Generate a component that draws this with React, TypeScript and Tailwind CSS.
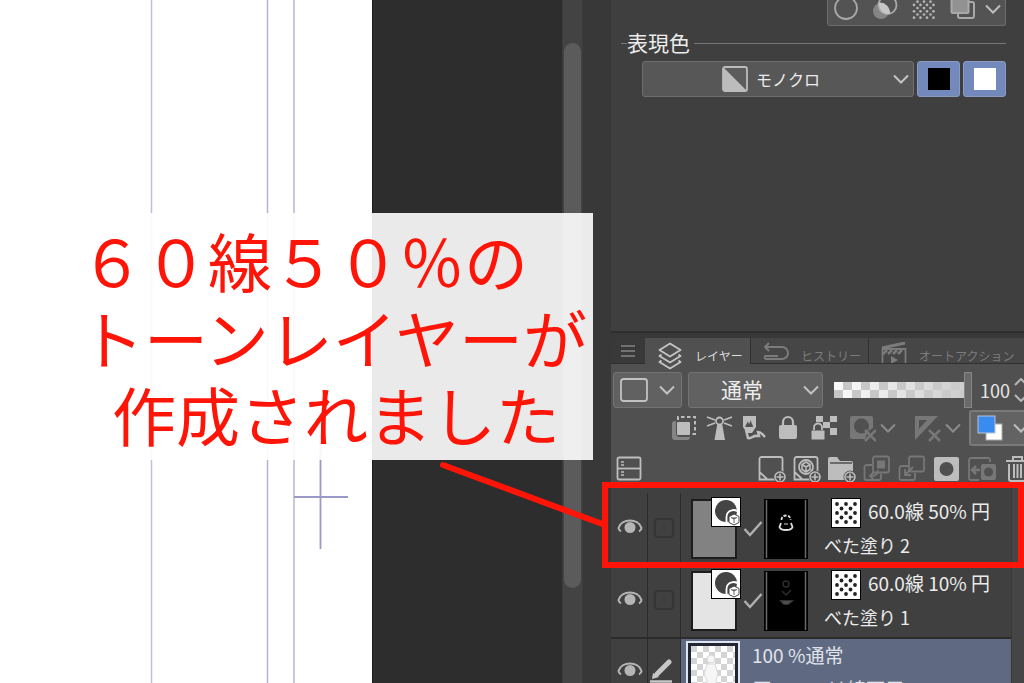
import { useState } from 'react';
import type { ReactNode } from 'react';

interface Layer {
  id: number;
  lines: string;
  name: string;
  fill: string;
  mask: ReactNode;
}

const layers: Layer[] = [
  {
    id: 2,
    lines: '60.0線 50% 円',
    name: 'べた塗り 2',
    fill: 'bg-[#828282]',
    mask: (
      <g fill="none" stroke="#e0e0e0" strokeWidth="1.8">
        <path d="M16.500 20c0-3 2-4.500 4.500-4.500s4.500 1.500 4.500 4.500" strokeDasharray="3 1.500" />
        <path d="M16 23l-1.500 4c1 4 12 4 13 0L26 23" />
        <path d="M19 24h4" stroke="#777" />
      </g>
    ),
  },
  {
    id: 1,
    lines: '60.0線 10% 円',
    name: 'べた塗り 1',
    fill: 'bg-[#e4e4e4]',
    mask: (
      <g fill="none" stroke="#2e2e2e" strokeWidth="1.4">
        <circle cx="21" cy="12" r="3" />
        <path d="M17 19l4 4 5-5" />
        <path d="M16 29h11l-4 3h-4z" fill="#555" stroke="#444" />
      </g>
    ),
  },
];

function Chevron({ className = '' }: { className?: string }) {
  return (
    <svg viewBox="0 0 16 10" className={`w-4 h-2.5 shrink-0 pointer-events-none ${className}`} fill="none" stroke="currentColor" strokeWidth="2">
      <path d="M1 1.5l7 7 7-7" />
    </svg>
  );
}

function Icon({ children, className = '' }: { children: ReactNode; className?: string }) {
  return (
    <svg viewBox="0 0 28 28" className={`w-7 h-7 shrink-0 ${className}`} fill="none" stroke="currentColor" strokeWidth="1.8">
      {children}
    </svg>
  );
}

function IconButton({ label, dim, children }: { label: string; dim?: boolean; children: ReactNode }) {
  return (
    <button aria-label={label} className={`shrink-0 ${dim ? 'text-[#777777]' : 'text-[#bdbdbd]'}`}>
      <Icon>{children}</Icon>
    </button>
  );
}

function PlusBadge() {
  return (
    <g>
      <circle cx="22" cy="22" r="6.5" fill="#505050" stroke="none" />
      <circle cx="22" cy="22" r="5" strokeWidth="1.6" />
      <path d="M22 18.5v7M18.5 22h7" strokeWidth="1.6" />
    </g>
  );
}

function ToneIcon() {
  const dots = [
    [5, 5], [14, 5], [23, 5],
    [9.5, 9.5], [18.5, 9.5],
    [5, 14], [14, 14], [23, 14],
    [9.5, 18.5], [18.5, 18.5],
    [5, 23], [14, 23], [23, 23],
  ];
  return (
    <svg viewBox="0 0 28 28" className="w-[30px] h-[30px] shrink-0 bg-white border border-black">
      {dots.map(([x, y]) => (
        <circle key={`${x}-${y}`} cx={x} cy={y} r="1.9" fill="#222222" />
      ))}
    </svg>
  );
}

function EyeButton() {
  return (
    <button aria-label="レイヤーの表示" className="w-[34px] pb-1 self-stretch flex items-center justify-center shrink-0 text-[#b5b5b5]">
      <svg viewBox="0 0 26 18" className="w-[26px] h-[18px]" fill="none" stroke="currentColor" strokeWidth="2">
        <path d="M4 13.500c-1.500-1-2.500-2-2.500-3.500C3 5 8 2.500 13 2.500S23 5 24.500 10c0 1.500-1 2.500-2.500 3.500" />
        <circle cx="13" cy="9.500" r="5.500" fill="currentColor" stroke="none" />
      </svg>
    </button>
  );
}

function Canvas() {
  return (
    <div className="flex-1 flex min-w-0">
      <div className="relative flex-1 bg-white overflow-hidden">
        <svg className="absolute right-0 top-0 w-[372px] h-full" stroke="#b4b4d2" strokeWidth="1.5">
          <line x1="151.500" y1="0" x2="151.500" y2="100%" stroke="#c0c0d2" />
          <line x1="267.500" y1="0" x2="267.500" y2="100%" />
          <line x1="294" y1="0" x2="294" y2="100%" />
          <path d="M320.500 445V549M294 497H348" stroke="#9a9ac8" strokeWidth="1.800" />
        </svg>
      </div>
      <div className="w-[190px] shrink-0 bg-[#2d2d2d] border-l border-[#1c1c1c]" />
      <div className="w-[21px] shrink-0 bg-[#434343] border-x border-[#3c3c3c] flex flex-col px-px">
        <div className="flex-1 mt-[43px] mb-[95px] rounded-full bg-[#5b5b5b]" />
      </div>
    </div>
  );
}

function PropertyPanel() {
  return (
    <section className="h-[333px] shrink-0 bg-[#3f3f3f] border-b-2 border-[#2e2e2e] pr-[18px]">
      <div className="flex justify-end">
        <div className="flex items-end gap-[13px] h-[26px] pl-[5px] pr-1 pb-[5px] bg-[#535353] border border-t-0 border-[#6c6c6c] rounded-b-[3px] text-[#a9a9a9]">
          <button aria-label="境界効果">
            <svg viewBox="0 0 26 24" className="w-[26px] h-6" fill="none" stroke="currentColor" strokeWidth="1.8">
              <circle cx="13" cy="12" r="11" />
            </svg>
          </button>
          <button aria-label="ライン抽出">
            <svg viewBox="0 0 26 24" className="w-[26px] h-6">
              <circle cx="9" cy="15" r="8" fill="#858585" />
              <circle cx="15.500" cy="9" r="9" fill="#535353" stroke="currentColor" strokeWidth="1.800" />
              <path d="M7 6.500C13 6 18.500 11 18 18C11 19 6 13 7 6.500z" fill="#c6c6c6" />
            </svg>
          </button>
          <button aria-label="トーン">
            <svg viewBox="0 0 26 24" className="w-[26px] h-6" fill="#b4b4b4">
              {[0, 1, 2, 3, 4, 5, 6].map((row) =>
                [0, 1, 2, 3].map((i) =>
                  row % 2 === 1 && i === 3 ? null : (
                    <circle key={`${row}-${i}`} cx={(row % 2 ? 6.5 : 3) + i * 6.5} cy={2.5 + row * 3.2} r="1.35" />
                  )
                )
              )}
            </svg>
          </button>
          <button aria-label="レイヤーカラー">
            <svg viewBox="0 0 26 24" className="w-[26px] h-6" fill="none" stroke="currentColor" strokeWidth="2">
              <rect x="8" y="6" width="16" height="16" rx="2" />
              <rect x="1.500" y="0" width="17" height="17" rx="1.500" fill="#929292" />
            </svg>
          </button>
          <button aria-label="その他" className="-ml-1 mb-[6px] text-[#bdbdbd]">
            <Chevron />
          </button>
        </div>
      </div>

      <div className="flex items-center gap-1 pl-[10px] mt-0.5 h-[30px] text-[21px] text-[#ececec]">
        <span className="w-1.5 -mr-1 h-px bg-[#777777]" />
        <label htmlFor="expression">表現色</label>
        <span className="flex-1 h-px bg-[#777777]" />
      </div>

      <div className="flex gap-[3px] pl-[31px] mt-[3px] h-[36px]">
        <div className="relative flex-1">
          <select
            id="expression"
            className="appearance-none w-full h-full pl-[113px] text-[16px] text-[#ececec] bg-[#575757] border border-[#6e6e6e] rounded-[3px]"
          >
            <option>モノクロ</option>
          </select>
          <svg viewBox="0 0 26 26" className="absolute left-20 top-[5px] w-[26px] h-[26px] pointer-events-none">
            <rect x="1" y="1" width="24" height="24" rx="2" fill="#5c5c5c" stroke="#bcbcbc" strokeWidth="1.800" />
            <path d="M1 1L25 25H1z" fill="#bcbcbc" />
          </svg>
          <Chevron className="absolute right-[5px] top-[13px] text-[#c4c4c4]" />
        </div>
        <button aria-label="黒" className="w-[43px] flex items-center justify-center bg-[#7389bb] border border-[#8a9ac0] rounded-[3px]">
          <span className="w-[22px] h-[22px] bg-black" />
        </button>
        <button aria-label="白" className="w-[43px] flex items-center justify-center bg-[#7389bb] border border-[#8a9ac0] rounded-[3px]">
          <span className="w-[22px] h-[22px] bg-white" />
        </button>
      </div>
    </section>
  );
}

function PaletteTabs() {
  return (
    <div className="relative z-10 flex h-[26px] shrink-0 bg-[#393939] text-[12px] whitespace-nowrap">
      <button aria-label="メニュー" className="w-[34px] shrink-0 flex items-center justify-center text-[#858585] border-b border-[#303030]">
        <svg viewBox="0 0 14 12" className="w-3.5 h-3" stroke="currentColor" strokeWidth="1.500">
          <path d="M0 1h14M0 6h14M0 11h14" />
        </svg>
      </button>
      <button className="w-[105px] shrink-0 flex items-start gap-3 pl-3 pt-1 bg-[#505050] text-[#dcdcdc]">
        <svg viewBox="0 0 26 28" className="w-[26px] h-7 shrink-0" fill="none" stroke="#c2c2c2" strokeWidth="2" strokeLinejoin="round">
          <path d="M13 1.500l10.500 6.500L13 14.500 2.500 8z" />
          <path d="M4.500 12.500l-2 1.500L13 20.500 23.500 14l-2-1.500" />
          <path d="M4.500 18.500l-2 1.500L13 26.500 23.500 20l-2-1.500" />
        </svg>
        <span className="pt-[5px]">レイヤー</span>
      </button>
      <button className="w-[119px] shrink-0 flex items-start gap-3 pl-3 pt-1 bg-[#464646] border-x border-b border-[#303030] text-[#7b7b7b]">
        <svg viewBox="0 0 26 20" className="w-[26px] h-5 shrink-0" fill="none" stroke="#7b7b7b" strokeWidth="2">
          <path d="M2 5h17a5.500 5.500 0 0 1 0 12H3c-2-1-2-3 0-3h12" />
          <path d="M6 1L2 5l4 4" />
        </svg>
        <span className="pt-[5px]">ヒストリー</span>
      </button>
      <button className="flex-1 flex items-start gap-3 pl-3 pt-1 bg-[#464646] border-b border-[#303030] text-[#7b7b7b] overflow-hidden">
        <svg viewBox="0 0 26 24" className="w-[26px] h-6 shrink-0" fill="none" stroke="#7b7b7b" strokeWidth="1.800">
          <path d="M1 6L24 1" strokeWidth="3" />
          <path d="M1.500 7h23v16h-23z" />
          <path d="M2 12l4-4M7 12l4-4M12 12l4-4M17 12l4-4" strokeWidth="2.500" />
          <path d="M10 14l7 4-7 4z" fill="#7b7b7b" stroke="none" />
        </svg>
        <span className="pt-[5px]">オートアクション</span>
      </button>
    </div>
  );
}

function BlendRow({ opacity, onOpacity }: { opacity: number; onOpacity: (n: number) => void }) {
  return (
    <div className="flex items-center mt-2 pl-0.5 h-[36px]">
      <button aria-label="パレットカラー" className="w-[69px] h-full shrink-0 flex items-center justify-between px-1.5 bg-[#616161] border border-[#747474] rounded-[3px] text-[#c2c2c2]">
        <svg viewBox="0 0 28 24" className="w-7 h-6" fill="none" stroke="currentColor" strokeWidth="1.800">
          <rect x="1" y="1" width="26" height="22" rx="2.500" />
        </svg>
        <Chevron />
      </button>
      <div className="relative w-[135px] h-full ml-[6px] shrink-0">
        <select
          aria-label="合成モード"
          className="appearance-none w-full h-full pl-[32px] text-[21px] text-[#ececec] bg-[#616161] border border-[#747474] rounded-[3px]"
        >
          <option>通常</option>
        </select>
        <Chevron className="absolute right-1 top-[13px] text-[#c2c2c2]" />
      </div>
      <input
        type="range"
        aria-label="不透明度"
        min={0}
        max={100}
        value={opacity}
        onChange={(e) => onOpacity(Number(e.target.value))}
        className="appearance-none w-[138px] h-full ml-[11px] shrink-0 bg-transparent [&::-webkit-slider-runnable-track]:h-4 [&::-webkit-slider-runnable-track]:[background:linear-gradient(to_right,transparent,#cbcbcb),repeating-conic-gradient(#c6c6c6_0_25%,#fbfbfb_0_50%)_0_0/18px_16px] [&::-webkit-slider-thumb]:appearance-none [&::-webkit-slider-thumb]:w-2 [&::-webkit-slider-thumb]:h-9 [&::-webkit-slider-thumb]:-mt-2.5 [&::-webkit-slider-thumb]:bg-[#6a6a6a] [&::-webkit-slider-thumb]:border [&::-webkit-slider-thumb]:border-[#868686]"
      />
      <span className="ml-2 text-[18px] text-[#e6e6e6]">{opacity}</span>
      <svg viewBox="0 0 14 24" className="w-3.5 h-6 ml-1 shrink-0" fill="none" stroke="#b5b5b5" strokeWidth="2">
        <path d="M1 7l6-6 6 6M1 17l6 6 6-6" />
      </svg>
    </div>
  );
}

function LockRow() {
  return (
    <div className="flex items-center mt-0.5 pl-[60px] h-[36px]">
      <div className="flex gap-[7px]">
        <IconButton label="下のレイヤーでクリッピング">
          <path d="M4 7a3 3 0 0 0-3 3v13a3 3 0 0 0 3 3h12a3 3 0 0 0 3-3H9a4 4 0 0 1-4-4V7z" fill="#858585" stroke="none" />
          <rect x="6" y="8" width="13" height="13" rx="1" fill="currentColor" stroke="none" />
          <path d="M7 6V3h17v17h-4" strokeDasharray="3.500 2.500" strokeWidth="2" />
        </IconButton>
        <IconButton label="参照レイヤーに設定">
          <path d="M11.500 9h4.500l3 17H8.500z" fill="currentColor" stroke="none" />
          <circle cx="13.500" cy="7" r="3.500" fill="#505050" />
          <path d="M1 3l8 3M1 12l8-3M26 3l-8 3M26 12l-8-3" />
        </IconButton>
        <IconButton label="下描きレイヤーに設定">
          <path d="M2 2h13v11l-4 6H6l-4-6z" fill="currentColor" stroke="none" />
          <path d="M4.500 13c0-3 2-3 2-6l1.500 3 2-4c0 4 2 4 2 7z" fill="#505050" stroke="none" />
          <path d="M5 16l2 8c4 1 5-3 9-2h2l-1-4c3 0 5 3 7 5" strokeWidth="2.500" />
        </IconButton>
        <IconButton label="レイヤーをロック">
          <rect x="3" y="11" width="18" height="14" rx="2" fill="currentColor" stroke="none" />
          <path d="M7 12V8a5 5 0 0 1 10 0v4" strokeWidth="2.200" />
        </IconButton>
        <IconButton label="透明ピクセルをロック">
          <path d="M5 2h7v6H5zM19 2h7v6h-7zM12 8h7v6h-7zM19 14h7v7h-7z" fill="currentColor" stroke="none" />
          <rect x="0" y="16" width="14" height="10" rx="1.500" fill="currentColor" stroke="#505050" strokeWidth="1" />
          <path d="M3 16v-2.500a4 4 0 0 1 8 0V16" />
        </IconButton>
      </div>
      <div className="flex items-center gap-1 ml-[9px]">
        <IconButton label="マスクを有効化" dim>
          <path d="M4 2h19a2 2 0 0 1 2 2v10l-5 3-3 8H4a2 2 0 0 1-2-2V4a2 2 0 0 1 2-2z" fill="currentColor" stroke="none" />
          <circle cx="13.500" cy="12" r="7.500" fill="#505050" stroke="none" />
          <path d="M17 16l11 11M28 16L17 27" strokeWidth="2.500" />
        </IconButton>
        <Chevron className="text-[#8c8c8c]" />
      </div>
      <div className="flex items-center gap-1 ml-[17px]">
        <IconButton label="定規の表示範囲" dim>
          <path fillRule="evenodd" d="M2 2h23L2 26zM6 6v9l8-9z" fill="currentColor" stroke="none" />
          <path d="M16 16l11 11M27 16L16 27" strokeWidth="2.500" />
        </IconButton>
        <Chevron className="text-[#8c8c8c]" />
      </div>
      <button aria-label="レイヤーカラーを変更" className="ml-[8px] w-[62px] h-full shrink-0 flex items-center gap-2.5 pl-[6px] bg-[#636363] border-2 border-[#7a7a7a] rounded-[3px] text-[#bdbdbd]">
        <svg viewBox="0 0 26 26" className="w-[26px] h-[26px] shrink-0">
          <rect x="9" y="9" width="16" height="16" fill="#ffffff" stroke="#aaaaaa" />
          <rect x="1" y="1" width="17" height="17" fill="#3a8bf0" stroke="#b8c4d8" />
        </svg>
        <Chevron />
      </button>
    </div>
  );
}

function CommandRow() {
  return (
    <div className="flex items-center mt-[9px] pl-[5px] h-[28px]">
      <IconButton label="2ペイン表示">
        <rect x="1.500" y="2.500" width="23" height="22" rx="1.500" />
        <path d="M2 13.500h22" />
        <path d="M5 7h3M5 10h3M5 17h3M5 20h3" strokeWidth="1.500" />
      </IconButton>
      <div className="flex gap-[7px] ml-[114px]">
        <IconButton label="新規ラスターレイヤー">
          <path d="M9 24L1.500 17V4a2 2 0 0 1 2-2h19a2 2 0 0 1 2 2v13M1.500 17v7.500H18" />
          <PlusBadge />
        </IconButton>
        <IconButton label="新規ベクターレイヤー">
          <path d="M9 24L1.500 17V4a2 2 0 0 1 2-2h19a2 2 0 0 1 2 2v13M1.500 17v7.500H18" />
          <circle cx="13" cy="12" r="7" />
          <path d="M13 7l4 2.500v5L13 17l-4-2.500v-5zM9 9.500l4 2.500 4-2.500M13 12v5" strokeWidth="1.500" />
          <PlusBadge />
        </IconButton>
        <IconButton label="新規レイヤーフォルダー">
          <path d="M0 25V4a2 2 0 0 1 2-2h7l3 4h11a2 2 0 0 1 2 2v17z" fill="currentColor" stroke="none" />
          <path d="M2 8h22" stroke="#505050" strokeWidth="1.500" />
          <PlusBadge />
        </IconButton>
        <IconButton label="下のレイヤーに転写" dim>
          <rect x="10" y="1.500" width="16" height="16" rx="2" />
          <rect x="14" y="5.500" width="8" height="8" fill="currentColor" stroke="none" />
          <path d="M9 10H3.500a2 2 0 0 0-2 2v11a2 2 0 0 0 2 2H16a2 2 0 0 0 2-2v-4M15 15c0 4-2 6-7 6M11 17l-4 4 4 4" />
        </IconButton>
        <IconButton label="下のレイヤーに結合" dim>
          <rect x="11" y="1.500" width="15" height="15" rx="2" />
          <path d="M10 11H3.500a2 2 0 0 0-2 2v10a2 2 0 0 0 2 2H15a2 2 0 0 0 2-2v-5M15 12l-8 8M7 14v6h6" />
        </IconButton>
        <IconButton label="レイヤーマスクを作成">
          <path fillRule="evenodd" d="M3 2h21a2 2 0 0 1 2 2v20a2 2 0 0 1-2 2H3a2 2 0 0 1-2-2V4a2 2 0 0 1 2-2zM13.500 7a7 7 0 1 0 0 14 7 7 0 0 0 0-14z" fill="currentColor" stroke="none" />
        </IconButton>
        <IconButton label="マスクをレイヤーに適用" dim>
          <path d="M22 7V5a2 2 0 0 0-2-2H3a2 2 0 0 0-2 2v18a2 2 0 0 0 2 2h8" />
          <path d="M12 15H4M8 11l-4 4 4 4" strokeWidth="2.500" />
          <rect x="13" y="9" width="15" height="16" rx="2" fill="currentColor" stroke="none" />
          <circle cx="20.500" cy="17" r="4.500" fill="#505050" stroke="none" />
        </IconButton>
        <IconButton label="レイヤーを削除">
          <path d="M3 6h23M10 5V2h9v3M6 9v15a2 2 0 0 0 2 2h13a2 2 0 0 0 2-2V9M11 9v14M14.500 9v14M18 9v14" strokeWidth="2" />
        </IconButton>
      </div>
    </div>
  );
}

function LayerRow({ layer }: { layer: Layer }) {
  return (
    <li className="flex items-center h-[72px] pl-0.5">
      <EyeButton />
      <div className="w-[34px] pb-0.5 self-stretch shrink-0 flex items-center justify-center border-x border-[#2b2b2b]">
        <input type="checkbox" aria-label={`${layer.name}を選択`} className="appearance-none w-5 h-5 rounded-[4px] border-2 border-[#353535]" />
      </div>
      <div className={`relative w-[46px] h-[60px] ml-[10px] shrink-0 border-2 border-[#1d1d1d] ${layer.fill}`}>
        <svg viewBox="0 0 28 28" className="absolute -top-1 left-[18px] w-[30px] h-[30px] bg-white border border-black">
          <circle cx="14" cy="13" r="11" fill="#444444" />
          <g fill="#444444" stroke="#ffffff" strokeWidth="1.800">
            <path d="M14.500 24v-5a7 7 0 0 1 13-3.500" fill="none" />
            <path d="M22 16l5 2.500v6L22 27l-5-2.500v-6z" fill="#ffffff" stroke="#444444" strokeWidth="1" />
            <path d="M19 19.500l3 1.500 3-1.500M22 21v4" stroke="#666666" strokeWidth="1" />
          </g>
        </svg>
      </div>
      <svg viewBox="0 0 20 16" className="w-5 h-4 ml-1.5 shrink-0" fill="none" stroke="#b0b0b0" strokeWidth="2.500">
        <path d="M1.500 8l5.500 6L18.500 1" />
      </svg>
      <svg viewBox="0 0 42 58" className="w-11 h-[60px] ml-px shrink-0 bg-black border border-black">
        <path d="M1.500 0V58M40.500 0V58" stroke="#6a6a6a" strokeWidth="1.500" />
        {layer.mask}
      </svg>
      <div className="flex-1 min-w-0 self-stretch pl-4 pt-1 text-[#ebebeb] whitespace-nowrap">
        <div className="flex items-center gap-[7px] pl-[7px] h-8 text-[19px]">
          <ToneIcon />
          <span className="pb-1">{layer.lines}</span>
        </div>
        <div className="text-[18px] leading-8">{layer.name}</div>
      </div>
    </li>
  );
}

function PaperLayerRow() {
  return (
    <li className="flex h-[72px] pl-0.5 border-t-2 border-[#2b2b2b]">
      <div className="flex h-[66px]">
        <EyeButton />
      </div>
      <div className="w-[34px] shrink-0 border-x border-[#2b2b2b] pt-5">
        <svg viewBox="0 0 30 28" className="w-[30px] h-7" fill="none" stroke="#c6c6c6">
          <path d="M9 15L21 3" strokeWidth="5" strokeLinecap="round" />
          <path d="M4 20l1-6 6 4z" fill="#c6c6c6" stroke="none" />
          <path d="M2 22.500h22" strokeWidth="2.500" />
        </svg>
      </div>
      <div className="flex-1 flex min-w-0 bg-[#5f6a82] pl-[5px]">
        <div className="w-[54px] shrink-0 mt-0.5 border-2 border-[#dfe4f2] bg-[#222633] p-[3px]">
          <svg viewBox="0 0 44 64" className="w-11 h-16 bg-white">
            <defs>
              <pattern id="checker" width="12" height="12" patternUnits="userSpaceOnUse">
                <path d="M0 0h6v6H0zM6 6h6v6H6z" fill="#d4d4d4" />
              </pattern>
            </defs>
            <rect width="44" height="64" fill="url(#checker)" />
            <circle cx="20" cy="13" r="4" fill="#f6f6f6" stroke="#d8d8d8" />
            <path d="M16 18h8l3 10-2 6 3 26H14l2-26-3-6z" fill="#f6f6f6" stroke="#d8d8d8" />
          </svg>
        </div>
        <div className="pl-[12px] text-[19px] text-[#e0e3ea] whitespace-nowrap leading-8">
          <div>100 %通常</div>
          <div className="pt-0.5">原一　　は線画用</div>
        </div>
      </div>
    </li>
  );
}

export default function App() {
  const [opacity, setOpacity] = useState(100);

  return (
    <div
      lang="ja"
      className="relative flex h-screen overflow-hidden bg-[#383838] font-['Noto_Sans_CJK_JP','Liberation_Sans',sans-serif]"
    >
      <Canvas />

      <aside className="w-[413px] ml-7 shrink-0 flex flex-col overflow-hidden">
        <PropertyPanel />
        <div className="h-[5px] shrink-0" />
        <PaletteTabs />
        <section className="flex-1 flex flex-col bg-[#505050]">
          <BlendRow opacity={opacity} onOpacity={setOpacity} />
          <LockRow />
          <CommandRow />
          <div className="flex-1 mt-1 flex bg-[#404040] min-h-0">
            <ul className="flex-1 pt-[6px] border-r border-[#393939]">
              {layers.map((layer) => (
                <LayerRow key={layer.id} layer={layer} />
              ))}
              <PaperLayerRow />
            </ul>
            <div className="w-3 bg-[#454545]" />
          </div>
        </section>
      </aside>

      <div className="absolute top-[213px] right-[431px] w-[513px] pt-2 pb-2 bg-white/90 text-[64px] leading-[77px] text-[#ff1408] whitespace-nowrap">
        <p>６０線５０％の</p>
        <p>トーンレイヤーが</p>
        <p className="pl-8">作成されました</p>
      </div>
      <svg viewBox="0 0 170 80" className="absolute top-[455px] right-[418px] w-[170px] h-20 pointer-events-none">
        <path d="M7 10L169 70" stroke="#ff1408" strokeWidth="6" strokeLinecap="round" />
      </svg>
      <div className="absolute top-[482px] right-0 w-[422px] h-[86px] border-[6px] border-[#ff1408] pointer-events-none" />
    </div>
  );
}
